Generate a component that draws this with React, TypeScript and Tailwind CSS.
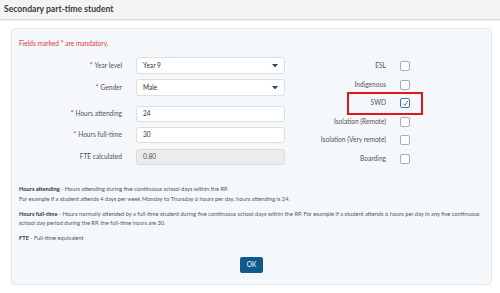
import React from 'react'

const flags = [
  { name: 'ESL', checked: false },
  { name: 'Indigenous', checked: false },
  { name: 'SWD', checked: true },
  { name: 'Isolation (Remote)', checked: false },
  { name: 'Isolation (Very remote)', checked: false },
  { name: 'Boarding', checked: false },
]

function Label({ text, required }: { text: string; required?: boolean }) {
  return (
    <div className="w-[103px] shrink-0 text-right text-[6.6px] text-[#555]">
      {required && <span className="text-[#e02020] mr-[2px]">*</span>}
      {text}
    </div>
  )
}

function Select({ value }: { value: string }) {
  return (
    <div className="flex h-[17px] w-[149px] items-center justify-between rounded-[3px] border border-[#dcdfe3] bg-white pl-[6px] pr-[6px] text-[6.6px] text-[#333]">
      <span>{value}</span>
      <svg width="6" height="3.5" viewBox="0 0 6 3.5">
        <path d="M0 0 L6 0 L3 3.5 Z" fill="#1d4f7c" />
      </svg>
    </div>
  )
}

function Input({ value, disabled }: { value: string; disabled?: boolean }) {
  return (
    <div
      className={
        disabled
          ? 'flex h-[16px] w-[149px] items-center rounded-[3px] border border-[#d8dadd] bg-[#ececec] pl-[6px] text-[6.6px] text-[#555]'
          : 'flex h-[16px] w-[149px] items-center rounded-[3px] border border-[#dcdfe3] bg-white pl-[6px] text-[6.6px] text-[#333]'
      }
    >
      {value}
    </div>
  )
}

function Checkbox({ checked }: { checked: boolean }) {
  return (
    <div
      className={
        checked
          ? 'flex h-[10px] w-[10px] items-center justify-center rounded-[2px] border border-[#3b78aa] bg-white'
          : 'h-[10px] w-[10px] rounded-[2px] border border-[#a9adb2] bg-white'
      }
    >
      {checked && (
        <svg width="7" height="7" viewBox="0 0 7 7">
          <path d="M1.2 3.6 L2.8 5.6 L5.8 1" stroke="#3b78aa" strokeWidth="0.9" fill="none" />
        </svg>
      )}
    </div>
  )
}

export default function App() {
  return (
    <div className="h-[293px] w-[500px] bg-white" style={{ fontFamily: 'Lato, "Noto Sans", sans-serif' }}>
      {/* Header */}
      <div className="flex h-[20px] items-center border-b border-[#dedede] bg-[#f4f4f4] pl-[4px] shadow-[0_1px_1px_rgba(0,0,0,0.05)]">
        <span className="text-[8.6px] font-bold text-[#3a3a3a]">Secondary part-time student</span>
      </div>

      {/* Panel */}
      <div className="mx-[11px] mt-[8px] h-[257px] w-[481px] rounded-[4px] border border-[#e4e8ec] bg-[#f4f8fb] px-[7px] pt-[10px]">
        <div className="text-[6.6px] leading-[9px] text-[#e53939]">Fields marked * are mandatory.</div>

        <div className="mt-[9px] flex">
          {/* Left column */}
          <div className="flex flex-col">
            <div className="flex items-center gap-[14px]">
              <Label text="Year level" required />
              <Select value="Year 9" />
            </div>
            <div className="mt-[5px] flex items-center gap-[14px]">
              <Label text="Gender" required />
              <Select value="Male" />
            </div>
            <div className="mt-[10px] flex items-center gap-[14px]">
              <Label text="Hours attending" required />
              <Input value="24" />
            </div>
            <div className="mt-[5px] flex items-center gap-[14px]">
              <Label text="Hours full-time" required />
              <Input value="30" />
            </div>
            <div className="mt-[6px] flex items-center gap-[14px]">
              <Label text="FTE calculated" />
              <Input value="0.80" disabled />
            </div>
          </div>

          {/* Right column */}
          <div className="relative ml-[20px] flex flex-col">
            {flags.map((f) => (
              <div key={f.name} className="flex h-[18.5px] items-center gap-[14px]">
                <div className="w-[81px] text-right text-[6.6px] text-[#555]">{f.name}</div>
                <Checkbox checked={f.checked} />
              </div>
            ))}
            <div className="absolute left-[42px] top-[35px] h-[23px] w-[76px] border-2 border-[#e8141c]" />
          </div>
        </div>

        {/* Help text */}
        <div className="mt-[16px] whitespace-nowrap text-[5.7px] leading-[9.5px] text-[#555]">
          <p>
            <span className="font-bold text-[#333]">Hours attending</span> - Hours attending during five continuous school days within the RP.
            <br />
            For example if a student attends 4 days per week Monday to Thursday 6 hours per day, hours attending is 24.
          </p>
          <p className="mt-[5.5px]">
            <span className="font-bold text-[#333]">Hours full-time</span> - Hours normally attended by a full-time student during five continuous school days within the RP. For example if a student attends 6 hours per day in any five continuous
            <br />
            school day period during the RP, the full-time hours are 30.
          </p>
          <p className="mt-[5.5px]">
            <span className="font-bold text-[#333]">FTE</span> - Full-time equivalent
          </p>
        </div>

        <div className="mt-[14px] flex justify-center">
          <button className="flex h-[16px] w-[23px] items-center justify-center rounded-[2px] bg-[#0d5b8c] text-[6.6px] text-white">
            OK
          </button>
        </div>
      </div>
    </div>
  )
}
